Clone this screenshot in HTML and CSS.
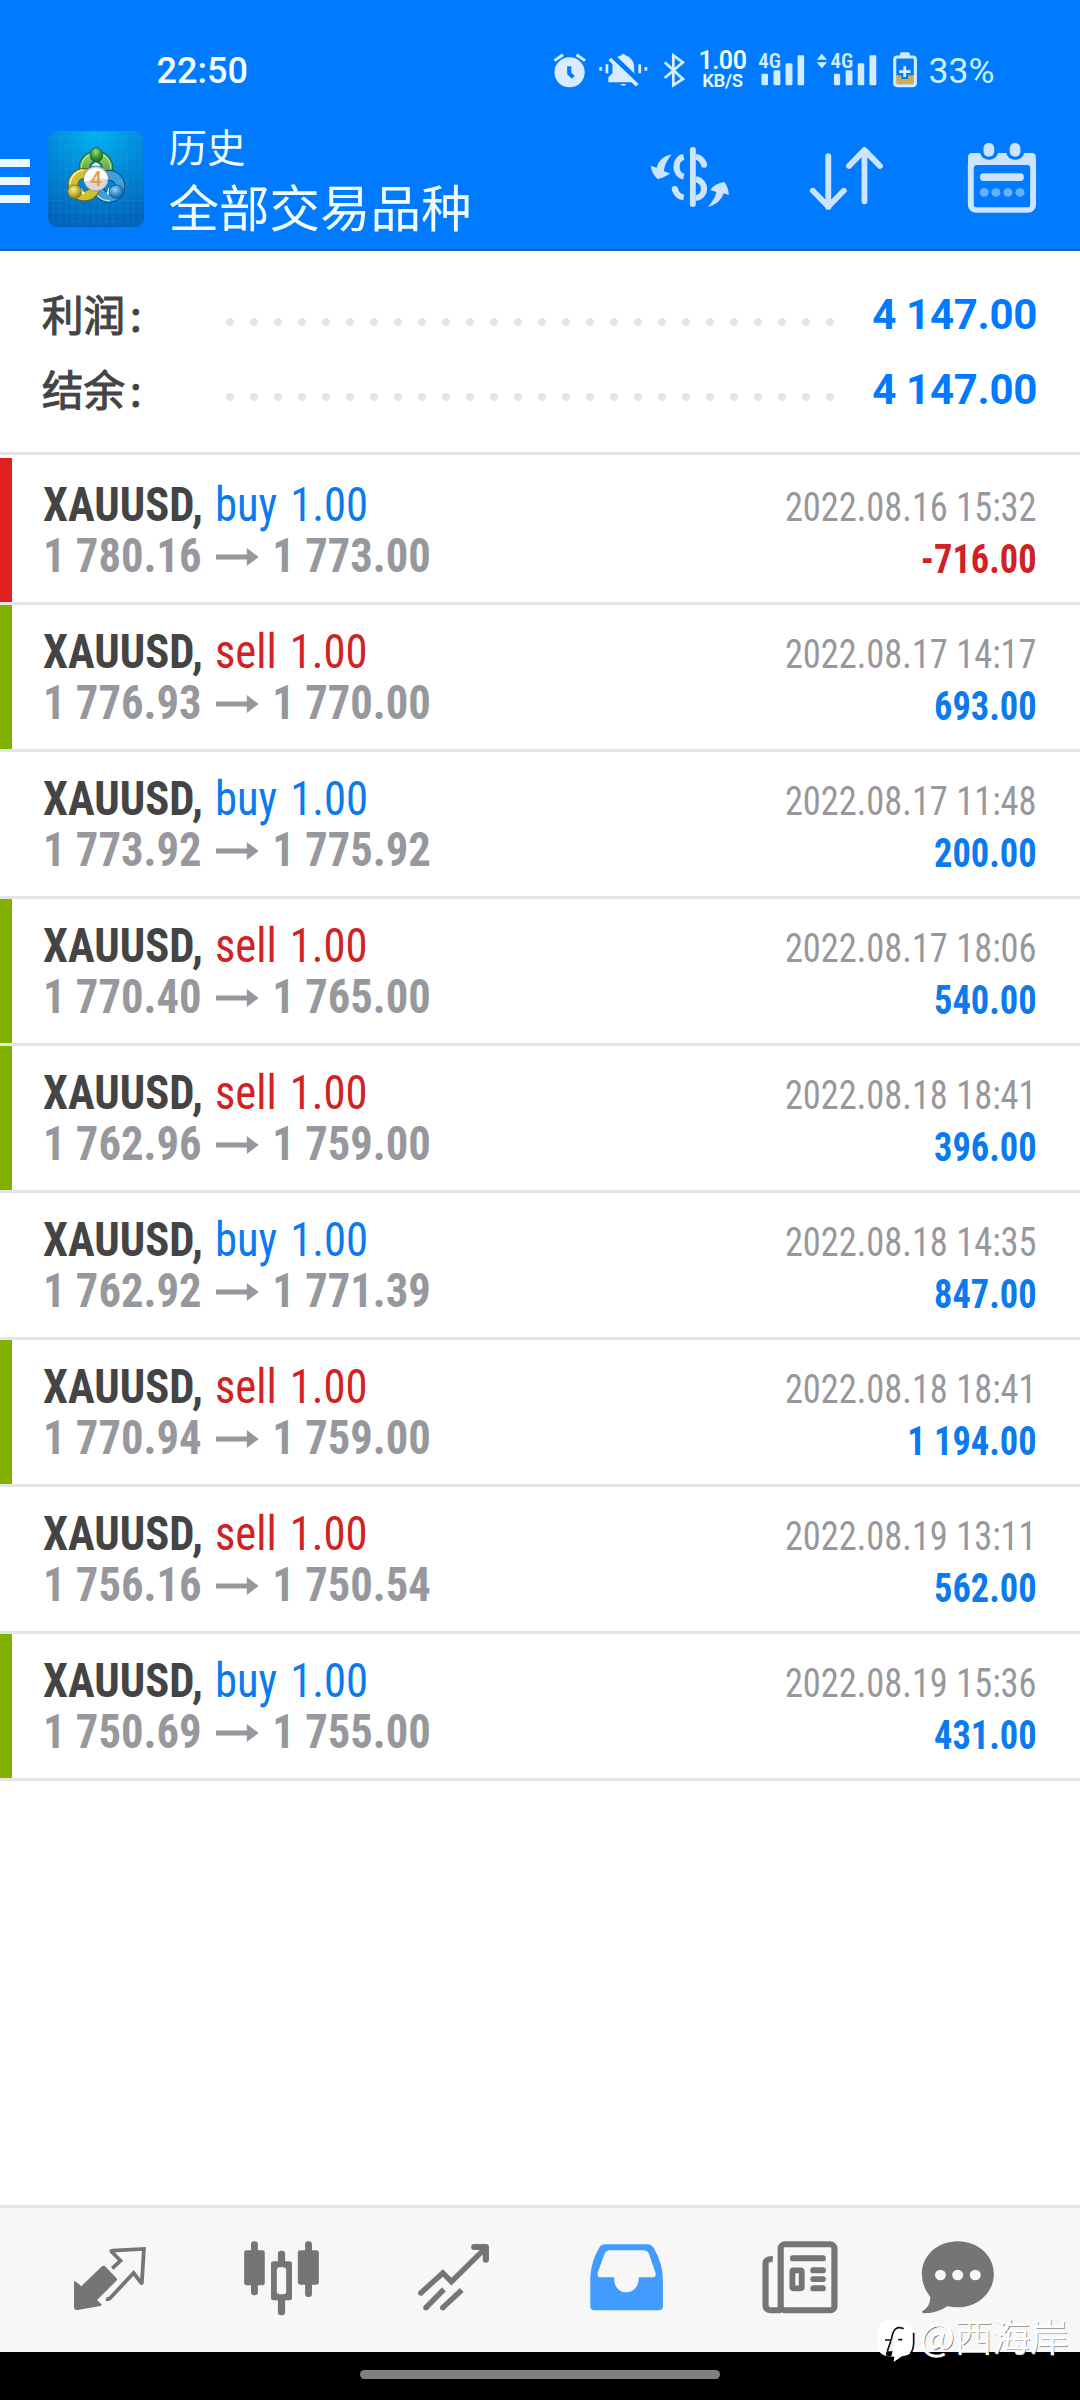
FILE: index.html
```
<!DOCTYPE html>
<html lang="zh-CN">
<head>
<meta charset="utf-8">
<title>历史</title>
<link rel="stylesheet" href="styles.css">
</head>
<body>
<div class="screen">
  <header class="top">
    <div class="status">
      <span class="clock">22:50</span>
      <div class="status-icons">
        <svg class="si alarm" viewBox="36 50 104 130" preserveAspectRatio="none"><ellipse cx="87" cy="123" rx="44" ry="45" fill="#d9ecff"/><path d="M43 88 68 70M107 70l25 18" stroke="#d9ecff" stroke-width="9"/><path d="M86 105v21l12 12" fill="none" stroke="#007aff" stroke-width="12"/></svg>
        <svg class="si bell" viewBox="170 50 148 130" preserveAspectRatio="none"><path fill="#d9ecff" d="M200 153v-15l12-12v-21c0-20 13-29 26-33q5-10 11 0c13 4 26 16 26 36v18l12 12v15zM235 158h17a9 8 0 0 1-17 0zM192 99h8v27h-8zM174 107h8v11h-8zM287 99h8v27h-8zM305 107h8v11h-8z"/><path d="M203 70 290 156" stroke="#007aff" stroke-width="22"/><path d="M204 83 284 162" stroke="#d9ecff" stroke-width="11"/></svg>
        <svg class="si bt" viewBox="357 50 66 130" preserveAspectRatio="none"><path d="M362 93 415 143 387 162V72L415 93 362 140" fill="none" stroke="#d9ecff" stroke-width="8"/></svg>
        <span class="speed"><b>1.00</b><i>KB/S</i></span>
        <svg class="si sig1" viewBox="635 50 137 130" preserveAspectRatio="none" fill="#d2ebff"><text x="636" y="111" font-size="61" textLength="66" lengthAdjust="spacingAndGlyphs">4G</text><rect x="645" y="127" width="19" height="35" rx="4"/><rect x="680" y="117" width="20" height="45" rx="4"/><rect x="715" y="96" width="20" height="66" rx="4"/><rect x="750" y="72" width="19" height="90" rx="4"/></svg>
        <svg class="si sig2" viewBox="803 50 177 130" preserveAspectRatio="none" fill="#d2ebff"><path d="M820 67l15 18h-30zM820 111l15-18h-30z"/><text x="845" y="111" font-size="61" textLength="66" lengthAdjust="spacingAndGlyphs">4G</text><rect x="855" y="127" width="18" height="35" rx="4"/><rect x="889" y="117" width="20" height="45" rx="4"/><rect x="924" y="96" width="19" height="66" rx="4"/><rect x="958" y="72" width="20" height="90" rx="4"/></svg>
        <svg class="si batt" viewBox="1027 50 70 130" preserveAspectRatio="none"><rect x="1047" y="63" width="29" height="14" rx="5" fill="#d2ebff"/><path fill="#d4ac4e" d="M1036 132h52v28h-52z"/><path d="M1061 98v45M1041 121h40" stroke="#007aff" stroke-width="20"/><rect x="1032" y="77" width="60" height="86" rx="7" fill="none" stroke="#d2ebff" stroke-width="9"/><path d="M1061 105v32M1045 121h33" stroke="#d9f2ff" stroke-width="8"/></svg>
        <span class="pct">33%</span>
      </div>
    </div>
    <div class="appbar">
      <div class="burger"><span></span><span></span><span></span></div>
      <svg class="logo" viewBox="24 33 288 288">
        <defs>
          <radialGradient id="sky" cx=".5" cy="0" r="1"><stop offset="0" stop-color="#02b4ee"/><stop offset=".5" stop-color="#0288d8"/><stop offset="1" stop-color="#0064b8"/></radialGradient>
          <linearGradient id="gr" x2="0" y2="1"><stop offset="0" stop-color="#8fd06a"/><stop offset="1" stop-color="#2f8f35"/></linearGradient>
          <radialGradient id="gb" cx=".45" cy=".3" r=".7"><stop offset="0" stop-color="#a2dc8c"/><stop offset=".6" stop-color="#2e9233"/><stop offset="1" stop-color="#166a20"/></radialGradient>
          <radialGradient id="yb" cx=".4" cy=".35" r=".7"><stop offset="0" stop-color="#f4f0a0"/><stop offset=".6" stop-color="#c0a92a"/><stop offset="1" stop-color="#8a7a18"/></radialGradient>
          <radialGradient id="bb" cx=".4" cy=".35" r=".7"><stop offset="0" stop-color="#9ad8fa"/><stop offset=".6" stop-color="#2788cc"/><stop offset="1" stop-color="#10609e"/></radialGradient>
        </defs>
        <rect x="24" y="33" width="288" height="288" rx="26" fill="url(#sky)"/>
        <path d="M40 33v288M60 33v288M80 33v288M100 33v288M120 33v288M140 33v288M160 33v288M180 33v288M200 33v288M220 33v288M240 33v288M260 33v288M280 33v288M300 33v288M24 50h288M24 82h288M24 114h288M24 146h288M24 178h288M24 210h288M24 242h288M24 274h288M24 306h288" stroke="#5cc8ff" stroke-opacity=".16" stroke-width="2"/>
        <circle cx="168" cy="144" r="35" fill="none" stroke="#1d5c28" stroke-width="34"/>
        <circle cx="168" cy="144" r="35" fill="none" stroke="url(#gr)" stroke-width="28"/>
        <path d="M124 146a45 45 0 0 1 28-44M184 102a45 45 0 0 1 28 44" fill="none" stroke="#b9e6a4" stroke-width="3"/>
        <circle cx="207" cy="199" r="33" fill="none" stroke="#0d4b80" stroke-width="32"/>
        <circle cx="207" cy="199" r="33" fill="none" stroke="#3f9fdc" stroke-width="26"/>
        <path d="M164 212a45 45 0 0 0 46 30" fill="none" stroke="#b6e2fa" stroke-width="4"/>
        <circle cx="133" cy="194" r="34" fill="none" stroke="#68661a" stroke-width="32"/>
        <circle cx="133" cy="194" r="34" fill="none" stroke="#cdc034" stroke-width="26"/>
        <path d="M90 192a45 45 0 0 1 40-42" fill="none" stroke="#f4ef9c" stroke-width="5"/>
        <path d="M154 137l14-12 14 12zM124 204l-8 18 18 1zM206 202l-6 20 18 2z" fill="#fff"/>
        <ellipse cx="169" cy="105" rx="19" ry="22" fill="url(#gb)" stroke="#1d5c28" stroke-width="2"/>
        <ellipse cx="104" cy="215" rx="21" ry="20" fill="url(#yb)" stroke="#68661a" stroke-width="2"/>
        <ellipse cx="229" cy="215" rx="22" ry="20" fill="url(#bb)" stroke="#0d4b80" stroke-width="2"/>
        <circle cx="168" cy="176" r="37" fill="#d9d9d9" stroke="#777" stroke-width="2"/>
        <path d="M132 185a36 36 0 1 1 72-8q-36-6-72 8z" fill="#fff"/>
        <text class="four" x="168" y="198" text-anchor="middle">4</text>
      </svg>
      <div class="titles"><span class="sub">历史</span><span class="main">全部交易品种</span></div>
      <svg class="act a1" viewBox="320 330 232 230" preserveAspectRatio="none" fill="#cce4ff"><path d="M383 373Q363 398 360 424l18 6q-16 14-36 17-18-18-20-40l17 6q8-32 44-40zM488 531q21-25 25-45l-18-6q14-21 41-24 12 17 13 39l-15-5q-10 32-46 41z"/><rect x="436" y="351" width="17" height="180" rx="8"/><path d="M418 381c-28 5-28 53 0 59M418 503q-20-4-26-26M453 380q18 4 24 24M453 447c32 8 32 52 0 57" fill="none" stroke="#cce4ff" stroke-width="18"/><circle cx="477" cy="404" r="9"/><circle cx="392" cy="477" r="9"/></svg>
      <svg class="act a2" viewBox="780 330 218 230" preserveAspectRatio="none"><path d="M836 378v153M791 482l45 48 45-48M941 514V361M896 408l45-48 45 48" fill="none" stroke="#cce4ff" stroke-width="17" stroke-linecap="round" stroke-linejoin="round"/></svg>
      <svg class="act a3" viewBox="1240 330 203 230" preserveAspectRatio="none"><rect x="1251" y="387" width="181" height="153" rx="16" fill="none" stroke="#cce4ff" stroke-width="17"/><path d="M1243 395v-14q0-12 12-12h173q12 0 12 12v24h-197z" fill="#cce4ff"/><path d="M1243 404h197v10h-14q-4-10-16-10h-136q-12 0-16 10h-15z" fill="#cce4ff"/><rect x="1278" y="330" width="52" height="59" rx="24" fill="#007aff"/><rect x="1354" y="330" width="52" height="59" rx="24" fill="#007aff"/><rect x="1288" y="339" width="31" height="41" rx="15" fill="#cce4ff"/><rect x="1364" y="339" width="31" height="41" rx="15" fill="#cce4ff"/><rect x="1278" y="430" width="127" height="23" rx="10" fill="#cce4ff"/><g fill="#66b0ff"><circle cx="1290" cy="487" r="13"/><circle cx="1324" cy="487" r="13"/><circle cx="1359" cy="487" r="13"/><circle cx="1394" cy="487" r="13"/></g></svg>
    </div>
  </header>

  <section class="summary">
    <div class="sum-row"><span class="label">利润<i>:</i></span><span class="dots"></span><span class="total">4 147.00</span></div>
    <div class="sum-row"><span class="label">结余<i>:</i></span><span class="dots"></span><span class="total">4 147.00</span></div>
  </section>

  <main class="deals">
    <article class="deal sl"><div class="left"><div class="sym"><b>XAUUSD,</b> <span class="buy">buy 1.00</span></div><div class="price">1 780.16<svg class="arr" viewBox="0 0 43 18" preserveAspectRatio="none"><path d="M0 6.500h31V0l12 9-12 9v-6.500H0z"/></svg>1 773.00</div></div><div class="right"><time>2022.08.16 15:32</time><span class="neg">-716.00</span></div></article>
    <article class="deal tp"><div class="left"><div class="sym"><b>XAUUSD,</b> <span class="sell">sell 1.00</span></div><div class="price">1 776.93<svg class="arr" viewBox="0 0 43 18" preserveAspectRatio="none"><path d="M0 6.500h31V0l12 9-12 9v-6.500H0z"/></svg>1 770.00</div></div><div class="right"><time>2022.08.17 14:17</time><span class="pos">693.00</span></div></article>
    <article class="deal"><div class="left"><div class="sym"><b>XAUUSD,</b> <span class="buy">buy 1.00</span></div><div class="price">1 773.92<svg class="arr" viewBox="0 0 43 18" preserveAspectRatio="none"><path d="M0 6.500h31V0l12 9-12 9v-6.500H0z"/></svg>1 775.92</div></div><div class="right"><time>2022.08.17 11:48</time><span class="pos">200.00</span></div></article>
    <article class="deal tp"><div class="left"><div class="sym"><b>XAUUSD,</b> <span class="sell">sell 1.00</span></div><div class="price">1 770.40<svg class="arr" viewBox="0 0 43 18" preserveAspectRatio="none"><path d="M0 6.500h31V0l12 9-12 9v-6.500H0z"/></svg>1 765.00</div></div><div class="right"><time>2022.08.17 18:06</time><span class="pos">540.00</span></div></article>
    <article class="deal tp"><div class="left"><div class="sym"><b>XAUUSD,</b> <span class="sell">sell 1.00</span></div><div class="price">1 762.96<svg class="arr" viewBox="0 0 43 18" preserveAspectRatio="none"><path d="M0 6.500h31V0l12 9-12 9v-6.500H0z"/></svg>1 759.00</div></div><div class="right"><time>2022.08.18 18:41</time><span class="pos">396.00</span></div></article>
    <article class="deal"><div class="left"><div class="sym"><b>XAUUSD,</b> <span class="buy">buy 1.00</span></div><div class="price">1 762.92<svg class="arr" viewBox="0 0 43 18" preserveAspectRatio="none"><path d="M0 6.500h31V0l12 9-12 9v-6.500H0z"/></svg>1 771.39</div></div><div class="right"><time>2022.08.18 14:35</time><span class="pos">847.00</span></div></article>
    <article class="deal tp"><div class="left"><div class="sym"><b>XAUUSD,</b> <span class="sell">sell 1.00</span></div><div class="price">1 770.94<svg class="arr" viewBox="0 0 43 18" preserveAspectRatio="none"><path d="M0 6.500h31V0l12 9-12 9v-6.500H0z"/></svg>1 759.00</div></div><div class="right"><time>2022.08.18 18:41</time><span class="pos">1 194.00</span></div></article>
    <article class="deal"><div class="left"><div class="sym"><b>XAUUSD,</b> <span class="sell">sell 1.00</span></div><div class="price">1 756.16<svg class="arr" viewBox="0 0 43 18" preserveAspectRatio="none"><path d="M0 6.500h31V0l12 9-12 9v-6.500H0z"/></svg>1 750.54</div></div><div class="right"><time>2022.08.19 13:11</time><span class="pos">562.00</span></div></article>
    <article class="deal tp"><div class="left"><div class="sym"><b>XAUUSD,</b> <span class="buy">buy 1.00</span></div><div class="price">1 750.69<svg class="arr" viewBox="0 0 43 18" preserveAspectRatio="none"><path d="M0 6.500h31V0l12 9-12 9v-6.500H0z"/></svg>1 755.00</div></div><div class="right"><time>2022.08.19 15:36</time><span class="pos">431.00</span></div></article>
  </main>

  <nav class="tabs">
    <svg viewBox="69.700 140 499.500 240" preserveAspectRatio="none"><path d="M215 273q5-1 21 15l60-60q4-4 9 0l33 35q4 4 0 8l-56 58 14 14q-2 4-8 5l-63 11q-10 1-10-9z" fill="#757575"/><path d="M326 234l24-23-26-27q-2-3 2-3l92-5-6 101q0 3-3 0l-21-29-68 75q-6 5-12 3" fill="none" stroke="#757575" stroke-width="11"/></svg>
    <svg viewBox="569.200 140 499.500 240" preserveAspectRatio="none"><g fill="#757575"><rect x="709" y="180" width="60" height="105" rx="7"/><rect x="729" y="153" width="20" height="162" rx="9"/><rect x="807" y="181" width="21" height="194" rx="9"/><rect x="787" y="213" width="61" height="117" rx="7"/><rect x="865" y="180" width="61" height="103" rx="7"/><rect x="886" y="153" width="20" height="167" rx="9"/></g><rect x="804" y="231" width="27" height="81" rx="9" fill="#f7f7f7"/></svg>
    <svg viewBox="1068.700 140 499.500 240" preserveAspectRatio="none"><g fill="none" stroke="#757575" stroke-width="16"><path d="M1222 308l64-60 25 26 99-101" stroke-linecap="round"/><path d="M1377 170h34v38" stroke-width="18" stroke-linecap="round" stroke-linejoin="round"/><path d="M1237 352l52-55M1286 352l55-53"/></g><circle cx="1237" cy="352" r="8" fill="#757575"/><circle cx="1286" cy="352" r="8" fill="#757575"/></svg>
    <svg viewBox="0 140 499.500 240" preserveAspectRatio="none"><path fill="#429bff" fill-rule="evenodd" d="M190 162h122q13 0 20 14 25 44 25 94v77q0 13-13 13H159q-13 0-13-13v-87q3-50 26-88 6-10 18-10zM204 180q-13 0-17 12l-19 54q-4 15 9 15h38c0 31 17 45 35 45s37-14 37-45h39q13 0 9-15l-19-56q-4-10-18-10z"/></svg>
    <svg viewBox="499.500 140 499.500 240" preserveAspectRatio="none"><rect x="699" y="162" width="156" height="198" rx="12" fill="none" stroke="#757575" stroke-width="18"/><path d="M676 206q-21-1-21 14v124q0 16 17 16h28" fill="none" stroke="#757575" stroke-width="18"/><g fill="#757575"><rect x="726" y="195" width="104" height="18" rx="8"/><rect x="785" y="231" width="45" height="18" rx="8"/><rect x="785" y="258" width="45" height="17" rx="8"/><rect x="785" y="285" width="45" height="18" rx="8"/></g><rect x="733" y="240" width="27" height="54" rx="3" fill="none" stroke="#757575" stroke-width="17"/></svg>
    <svg viewBox="999 140 499.500 240" preserveAspectRatio="none"><path fill="#757575" d="M1213 153c58 0 105 42 105 98s-47 100-105 100q-15 0-30-3-28 20-64 21-10 0-9-6 25-15 23-44-24-30-24-68c0-56 46-98 104-98z"/><g fill="#f7f7f7"><circle cx="1163" cy="254" r="16"/><circle cx="1213" cy="254" r="16"/><circle cx="1264" cy="254" r="16"/></g></svg>
  </nav>
  <footer class="gesture"><span></span></footer>

  <div class="mark">
    <svg viewBox="24 60 114 130"><path d="M79 62c44 0 56 12 56 55 0 40-9 51-36 54L74 188l2-16c-42 0-52-12-52-55s11-55 55-55z" fill="#fff"/><path d="M54 158l13-36h11l-8 36z" fill="#f3f3f3"/><path d="M53 156h18l-4 15q-9 0-17-3z" fill="#000"/><path d="M66 123l-11 33M104 88q-22-10-31 10-5 12-6 24M48 122h19M88 121h12M134 100v30q-1 24-10 32" fill="none" stroke="#111" stroke-width="5"/></svg>
    <span>@西海岸</span>
  </div>
</div>
</body>
</html>
```
FILE: styles.css
```
* { box-sizing: border-box; }
body { margin: 0; background: #fff; font-family: Roboto, "Noto Sans CJK SC", sans-serif; }
.screen { position: relative; width: 1080px; height: 2400px; display: flex; flex-direction: column; overflow: hidden; background: #fff; }

.top { height: 251px; flex: none; background: #007aff; border-bottom: 2px solid #1a66b3; }
.status { height: 107px; padding: 33px 0 0 156.500px; display: flex; align-items: center; }
.clock { width: 120px; font-size: 36px; font-weight: 500; color: #f0fcff; line-height: 74px; padding-top: 1px; }
.status-icons { display: flex; align-items: center; margin-left: 275.800px; }
.si { height: 43.300px; display: block; flex: none; font-family: "Roboto Condensed", Roboto, sans-serif; font-weight: 600; }
.alarm { width: 35.800px; }
.bell { width: 51px; margin-left: 10.300px; }
.bt { width: 22.700px; margin-left: 13.400px; }
.speed { width: 50px; margin-left: 12px; display: flex; flex-direction: column; align-items: center; color: #e8faff; }
.speed b { font-size: 25px; line-height: 22px; font-weight: 600; letter-spacing: -.5px; }
.speed i { font-size: 18.500px; line-height: 18px; font-style: normal; font-weight: 600; letter-spacing: -.3px; }
.sig1 { width: 47.200px; margin-left: 10.900px; }
.sig2 { width: 61px; margin-left: 10.700px; }
.batt { width: 24.100px; margin-left: 16.200px; }
.pct { margin-left: 11px; font-size: 35.500px; color: #cdf0ff; line-height: 74px; padding-top: 1px; }

.appbar { height: 142px; display: flex; align-items: center; }
.burger { width: 30px; height: 44px; display: flex; flex-direction: column; justify-content: space-between; margin-top: 5px; }
.burger span { height: 8px; background: #ebf8ff; }
.logo { width: 96px; height: 96px; margin-left: 18px; margin-top: 2px; }
.four { font: 500 62px Roboto, sans-serif; fill: #f09a42; }
.titles { width: 340px; margin-left: 24.500px; margin-top: -4px; display: flex; flex-direction: column; color: #f0fcff; font-family: "Noto Sans CJK SC", sans-serif; white-space: nowrap; }
.sub { font-size: 38.500px; line-height: 58px; }
.main { font-size: 50.500px; line-height: 62px; }
.act { height: 76.700px; flex: none; margin-top: 1px; }
.a1 { width: 79.900px; margin-left: 141.700px; }
.a2 { width: 75.100px; margin-left: 78.500px; }
.a3 { width: 69.900px; margin-left: 83.300px; }

.summary { height: 204px; flex: none; padding-top: 26px; border-bottom: 3px solid #e5e5e5; }
.sum-row { height: 75px; display: flex; align-items: center; padding: 0 43px 0 42px; }
.label { width: 176px; margin-top: -2px; font-family: "Noto Sans CJK SC", sans-serif; font-size: 41.500px; line-height: 75px; color: #444; -webkit-text-stroke: 1.100px #444; }
.label i { font-style: normal; margin-left: 5px; }
.dots { width: 624px; height: 24px; margin-top: 14px; background: radial-gradient(circle, #e5e5e5 3.500px, transparent 4.300px) 0 0 / 24px 24px repeat-x; }
.total { margin-left: auto; font-size: 42px; font-weight: 700; letter-spacing: -.3px; color: #007aff; }

.deals { flex: 1; padding-top: 3px; font-family: "Roboto Condensed", Roboto, sans-serif; }
.deal { height: 147px; display: flex; justify-content: space-between; padding: 0 43px; border-bottom: 3px solid #e5e5e5; }
.sl { background: linear-gradient(#e02020, #e02020) 0 0 / 12px 100% no-repeat padding-box; }
.tp { background: linear-gradient(#80b000, #80b000) 0 0 / 12px 100% no-repeat padding-box; }
.left { padding-top: 21px; font-size: 48px; line-height: 51px; white-space: nowrap; transform: scaleX(.93); transform-origin: 0 0; }
.sym b { color: #444; font-weight: 700; }
.price { font-weight: 700; color: #97989d; }
.arr { width: 46px; height: 18px; margin: 0 15px; vertical-align: 6px; fill: #97989d; }
.buy, .sell { margin-left: 2px; word-spacing: 3px; }
.buy { color: #0a7aee; }
.sell { color: #d02222; }
.right { padding-top: 24px; display: flex; flex-direction: column; text-align: right; font-size: 40px; line-height: 51px; white-space: nowrap; transform: scaleX(.91); transform-origin: 100% 0; }
.right time { color: #97989d; }
.pos, .neg { font-weight: 700; color: #0a7aee; padding-top: 1px; }
.neg { color: #d02222; }

.tabs { flex: none; height: 147px; padding: 29px 24px 0; display: flex; background: #f7f7f7; border-top: 3px solid #e5e5e5; }
.tabs svg { width: 172px; height: 80px; flex: none; }
.gesture { flex: none; height: 48px; background: #000; padding-top: 18px; display: flex; justify-content: center; }
.gesture span { width: 360px; height: 9px; border-radius: 5px; background: #808080; }

.mark { position: absolute; left: 877px; top: 2307px; display: flex; align-items: center; gap: 5px; }
.mark svg { width: 38px; height: 44px; margin-top: 12px; }
.mark span { font: 300 38px/56px "Noto Sans CJK SC", sans-serif; color: #fff; text-shadow: 1px 1px 0 #555; -webkit-text-stroke: 1px #fff; }
```
